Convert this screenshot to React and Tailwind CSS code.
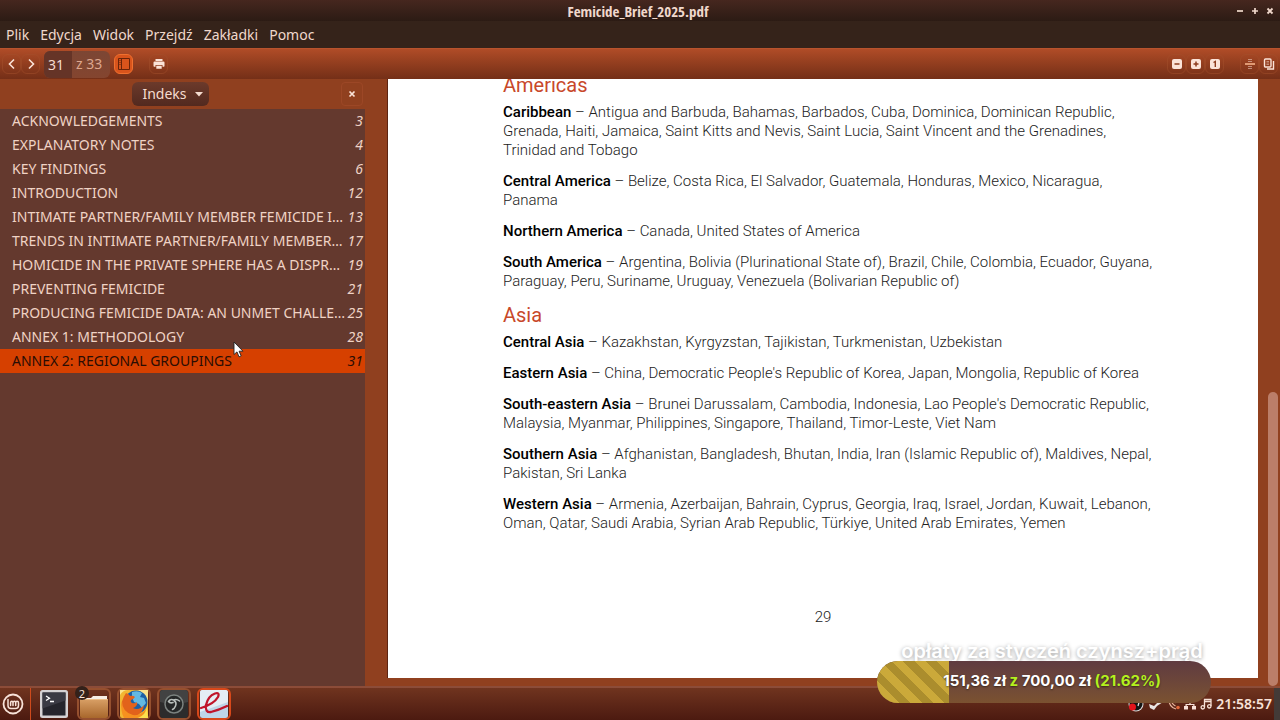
import React from 'react';

const menuItems = ['Plik', 'Edycja', 'Widok', 'Przejdź', 'Zakładki', 'Pomoc'];

const outline = [
  { title: 'ACKNOWLEDGEMENTS', page: 3 },
  { title: 'EXPLANATORY NOTES', page: 4 },
  { title: 'KEY FINDINGS', page: 6 },
  { title: 'INTRODUCTION', page: 12 },
  { title: 'INTIMATE PARTNER/FAMILY MEMBER FEMICIDE I…', page: 13 },
  { title: 'TRENDS IN INTIMATE PARTNER/FAMILY MEMBER…', page: 17 },
  { title: 'HOMICIDE IN THE PRIVATE SPHERE HAS A DISPR…', page: 19 },
  { title: 'PREVENTING FEMICIDE', page: 21 },
  { title: 'PRODUCING FEMICIDE DATA: AN UNMET CHALLE…', page: 25 },
  { title: 'ANNEX 1: METHODOLOGY', page: 28 },
  { title: 'ANNEX 2: REGIONAL GROUPINGS', page: 31 },
];

const regions = [
  {
    name: 'Americas',
    groups: [
      { name: 'Caribbean', lines: ['Antigua and Barbuda, Bahamas, Barbados, Cuba, Dominica, Dominican Republic,', 'Grenada, Haiti, Jamaica, Saint Kitts and Nevis, Saint Lucia, Saint Vincent and the Grenadines,', 'Trinidad and Tobago'] },
      { name: 'Central America', lines: ['Belize, Costa Rica, El Salvador, Guatemala, Honduras, Mexico, Nicaragua,', 'Panama'] },
      { name: 'Northern America', lines: ['Canada, United States of America'] },
      { name: 'South America', lines: ['Argentina, Bolivia (Plurinational State of), Brazil, Chile, Colombia, Ecuador, Guyana,', 'Paraguay, Peru, Suriname, Uruguay, Venezuela (Bolivarian Republic of)'] },
    ],
  },
  {
    name: 'Asia',
    groups: [
      { name: 'Central Asia', lines: ['Kazakhstan, Kyrgyzstan, Tajikistan, Turkmenistan, Uzbekistan'] },
      { name: 'Eastern Asia', lines: ["China, Democratic People's Republic of Korea, Japan, Mongolia, Republic of Korea"] },
      { name: 'South-eastern Asia', lines: ["Brunei Darussalam, Cambodia, Indonesia, Lao People's Democratic Republic,", 'Malaysia, Myanmar, Philippines, Singapore, Thailand, Timor-Leste, Viet Nam'] },
      { name: 'Southern Asia', lines: ['Afghanistan, Bangladesh, Bhutan, India, Iran (Islamic Republic of), Maldives, Nepal,', 'Pakistan, Sri Lanka'] },
      { name: 'Western Asia', lines: ['Armenia, Azerbaijan, Bahrain, Cyprus, Georgia, Iraq, Israel, Jordan, Kuwait, Lebanon,', 'Oman, Qatar, Saudi Arabia, Syrian Arab Republic, Türkiye, United Arab Emirates, Yemen'] },
    ],
  },
];

const ToolButton = ({ label, children, className = 'border-[#a4502c]/50' }) => (
  <button aria-label={label} className={`flex h-5 w-[19px] items-center justify-center rounded-md border ${className}`}>
    {children}
  </button>
);

const TitleBar = () => (
  <header className="flex h-[21px] shrink-0 items-center bg-linear-to-b from-[#46271f] to-[#2c1b14] text-[#f0d8cc]">
    <div className="flex-1" />
    <h1 className="font-['Ubuntu_Condensed','Open_Sans_Condensed','Roboto_Condensed','Liberation_Sans_Narrow',Roboto,sans-serif] text-[15px] leading-5 font-medium">Femicide_Brief_2025.pdf</h1>
    <div className="flex flex-1 justify-end gap-[3px] pr-1">
      <button aria-label="Minimalizuj" className="h-3 w-3">
        <svg viewBox="0 0 12 12" className="h-3 w-3" stroke="currentColor" strokeWidth="1.7"><path d="M3 6h6" /></svg>
      </button>
      <button aria-label="Maksymalizuj" className="h-3 w-3">
        <svg viewBox="0 0 12 12" className="h-3 w-3" stroke="currentColor" strokeWidth="1.7"><path d="M3 6h6M6 3v6" /></svg>
      </button>
      <button aria-label="Zamknij okno" className="h-3 w-3">
        <svg viewBox="0 0 12 12" className="h-3 w-3" stroke="currentColor" strokeWidth="1.9"><path d="M3.500 3.500l5 5M8.500 3.500l-5 5" /></svg>
      </button>
    </div>
  </header>
);

const MenuBar = () => (
  <nav className="flex h-[27px] shrink-0 items-center gap-[11px] bg-[#35231a] px-1.5 text-sm text-[#f0d8cc]">
    {menuItems.map((item) => (
      <button key={item}>{item}</button>
    ))}
  </nav>
);

const Toolbar = () => (
  <div className="flex h-[31px] shrink-0 items-center border-t border-[#b9532d] bg-linear-to-b from-[#b04c27] to-[#742f17] px-0.5 text-[#fbe3d8]">
    <ToolButton label="Poprzednia strona">
      <svg viewBox="0 0 12 12" className="h-3 w-3" fill="none" stroke="currentColor" strokeWidth="1.6"><path d="M8 1.500L3.500 6L8 10.500" /></svg>
    </ToolButton>
    <ToolButton label="Następna strona">
      <svg viewBox="0 0 12 12" className="h-3 w-3" fill="none" stroke="currentColor" strokeWidth="1.6"><path d="M4 1.500L8.500 6L4 10.500" /></svg>
    </ToolButton>
    <div className="ml-1 flex h-[27px] w-[66px] items-center overflow-hidden rounded-md bg-linear-to-b from-[#7c4634] to-[#84452f] text-sm text-[#dda78f]">
      <input aria-label="Strona" defaultValue="31" className="h-full w-7 bg-[#653427] pl-1 text-[#f5dcd0] outline-none" />
      <span className="pl-1 whitespace-nowrap">z 33</span>
    </div>
    <ToolButton label="Panel boczny" className="ml-1 border-[#f0702f] bg-[#d9541c]">
      <svg viewBox="0 0 12 12" className="h-3 w-3 shrink-0" fill="none" stroke="#6a2409"><path d="M.5.500h11v11H.500zM3.500.500v11" /><path d="M1.500 2.500h1M1.500 4.500h1M1.500 6.500h1" /></svg>
    </ToolButton>
    <ToolButton label="Drukuj" className="ml-4 border-[#a4502c]/50">
      <svg viewBox="0 0 12 12" className="h-3 w-3" fill="currentColor"><path d="M2.500 1h7v2h-7zM1.500 3.500h9q1 0 1 1v3.500q0 .8-.8.8H9.500V7H2.500v1.800H1.300Q.5 8.800.500 8V4.500q0-1 1-1zM3.300 7.700h5.400v3H3.300z" /></svg>
    </ToolButton>
    <div className="flex-1" />
    <ToolButton label="Pomniejsz">
      <svg viewBox="0 0 12 12" className="h-3 w-3"><rect x="1" y="1" width="10" height="10" rx="2" fill="currentColor" /><path d="M3.500 6h5" stroke="#8d3b1d" strokeWidth="1.500" /></svg>
    </ToolButton>
    <ToolButton label="Powiększ">
      <svg viewBox="0 0 12 12" className="h-3 w-3"><rect x="1" y="1" width="10" height="10" rx="2" fill="currentColor" /><path d="M3.500 6h5M6 3.500v5" stroke="#8d3b1d" strokeWidth="1.500" /></svg>
    </ToolButton>
    <ToolButton label="Rozmiar rzeczywisty">
      <svg viewBox="0 0 12 12" className="h-3 w-3"><rect x="1" y="1" width="10" height="10" rx="2" fill="currentColor" /><path d="M4.500 4.500L6.300 3.500V9" fill="none" stroke="#8d3b1d" strokeWidth="1.400" /></svg>
    </ToolButton>
    <ToolButton label="Widok ciągły" className="ml-4 border-[#a4502c]/50">
      <svg viewBox="0 0 12 12" className="h-3 w-3" fill="none" stroke="currentColor"><path d="M1 6h10" stroke="#fbb98f" strokeWidth="1.500" /><path d="M4 1.500h4M4 3.500h4M4 8.500h4M4 10.500h4" opacity=".5" /></svg>
    </ToolButton>
    <ToolButton label="Dwie strony">
      <svg viewBox="0 0 12 12" className="h-3 w-3" fill="none" stroke="currentColor" strokeWidth="1.400"><rect x="1.500" y="1" width="6.500" height="8" rx="1" /><path d="M10.500 3v8H4" /><path d="M3.500 3.500h2.500M3.500 5h2.500M3.500 6.500h2.500" strokeWidth=".7" opacity=".7" /></svg>
    </ToolButton>
  </div>
);

const Sidebar = () => (
  <aside className="flex w-[365px] shrink-0 flex-col">
    <div className="flex h-[30px] shrink-0 items-center pr-0.5">
      <div className="flex flex-1 justify-center">
        <button className="flex h-6 items-center gap-2 rounded-md bg-linear-to-b from-[#6c3a2b] to-[#52291f] pr-1.5 pl-2.5 text-sm text-[#f5dcd0]">
          Indeks
          <svg viewBox="0 0 8 5" className="h-[5px] w-2" fill="currentColor"><path d="M0 0h8L4 4.500z" /></svg>
        </button>
      </div>
      <button aria-label="Zamknij panel" className="flex h-6 w-[22px] items-center justify-center rounded border border-[#9c4726] text-[#fbe3d8]">
        <svg viewBox="0 0 8 8" className="h-2 w-2" stroke="currentColor" strokeWidth="1.700"><path d="M1.500 1.500l5 5M6.500 1.500l-5 5" /></svg>
      </button>
    </div>
    <ul className="flex-1 bg-[#64392e] text-sm text-[#f0d3c5]">
      {outline.map((item) => (
        <li key={item.page}>
          <a href={`#page-${item.page}`} className={`flex h-6 items-center justify-between pr-0.5 pl-3 whitespace-nowrap ${item.page === 31 ? 'bg-[#d64000] text-[#2a0d04]' : ''}`}>
            <span>{item.title}</span>
            <span className="italic">{item.page}</span>
          </a>
        </li>
      ))}
    </ul>
  </aside>
);

const Document = () => (
  <main className="flex min-w-0 flex-1 bg-[#90401f] pl-[22px]">
    <article className="mb-2 flex flex-1 flex-col justify-end overflow-hidden border-l border-[#5c2412] bg-white pl-[115px] font-[Roboto,sans-serif] text-[15px] leading-[19px] font-light text-[#222]">
      {regions.map((region) => (
        <section key={region.name}>
          <h2 className="mb-1.5 text-xl leading-6 font-normal text-[#c8482a]">{region.name}</h2>
          {region.groups.map((group) => (
            <p key={group.name} className="mb-3 whitespace-nowrap">
              <b className="font-medium text-black">{group.name}</b> – {group.lines.map((line, i) => (
                <React.Fragment key={line}>{i > 0 && <br />}{line}</React.Fragment>
              ))}
            </p>
          ))}
        </section>
      ))}
      <footer className="mt-[63px] mb-[51px] pr-[115px] text-center">29</footer>
    </article>
    <div className="flex w-[22px] shrink-0 flex-col justify-end pl-2.5">
      <div className="h-[294px] w-2.5 rounded-full bg-[#bb7e69]" />
    </div>
  </main>
);

const TerminalIcon = () => (
  <svg viewBox="0 0 28 28" className="h-7 w-7">
    <rect width="28" height="28" rx="2.500" fill="#d5d2d4" />
    <rect x="2.500" y="2.500" width="23" height="23" fill="#25252d" />
    <path d="M2.500 2.500h23v8l-23 8z" fill="#3a3a44" />
    <path d="M6 6l3.500 2.200L6 10.500M10 11.500h4" fill="none" stroke="#fff" strokeWidth="1.300" />
  </svg>
);

const FolderIcon = () => (
  <svg viewBox="0 0 28 28" className="h-7 w-7">
    <defs>
      <linearGradient id="folder" x1="0" y1="0" x2="0" y2="1">
        <stop offset="0" stopColor="#d9a066" />
        <stop offset="1" stopColor="#a8672c" />
      </linearGradient>
    </defs>
    <path d="M0 8h11l2-2h14v4H0z" fill="#f7eee4" />
    <path d="M0 9h28v17q0 2-2 2H2q-2 0-2-2z" fill="url(#folder)" />
    <path d="M.5 9.500h27" stroke="#edbd86" />
  </svg>
);

const FirefoxIcon = () => (
  <svg viewBox="0 0 28 28" className="h-7 w-7">
    <rect width="28" height="28" rx="2" fill="#f2b632" />
    <path d="M0 5Q3 0 8 0H0zM18 0h10v14Q26 4 18 0z" fill="#fbe28a" />
    <circle cx="16" cy="12" r="11.500" fill="#1d5fa4" />
    <path d="M12 2q6-2 10 1l-2 4 4 1 2 5-4 5-3-4-5-2-2-5z" fill="#63b9e2" />
    <path d="M6 3q3 1 4 3 3-1 5 1-1 2-4 3-1 2 1 3 3 1 5-1 1 4-4 6 6 3 11-3-1 9-9 11-9 1-13-7Q0 12 6 3z" fill="#e2621b" />
    <path d="M2 11q0 11 11 14 8 1 13-6-2 8-9 9H4q-4-7-2-17z" fill="#f6911f" />
    <path d="M18 28q8-3 9-11l1 11z" fill="#fce04e" />
  </svg>
);

const ObsIcon = () => (
  <svg viewBox="0 0 28 28" className="h-7 w-7">
    <rect width="28" height="28" rx="3" fill="#2c2c2c" />
    <path d="M0 3q0-3 3-3h22q3 0 3 3v9Q14 16 0 12z" fill="#424242" />
    <circle cx="14" cy="14" r="9" fill="#252727" stroke="#7b827f" strokeWidth="1.500" />
    <path d="M8.500 11.500q2-3 5-1.500 3-1.500 6 1M14 10.500q3 2 1.500 5.500-1 2.500-3 3.500M8.500 11.500q1.500 2 4.500 1" fill="none" stroke="#b9bfbc" strokeWidth="1.600" strokeLinecap="round" />
  </svg>
);

const ReaderIcon = () => (
  <svg viewBox="0 0 28 28" className="h-7 w-7">
    <rect width="28" height="28" rx="2.500" fill="#bed5e8" />
    <path d="M0 2.500Q0 0 2.500 0h23Q28 0 28 2.500V12L0 22z" fill="#e4edf5" />
    <path d="M1 18Q14 14 18 7q2-5-3-3.500Q8 6 6 15q-1 8 5 7 8-2 16-6" fill="none" stroke="#c0142b" strokeWidth="2.300" strokeLinecap="round" />
  </svg>
);

const tasks = [
  { label: 'Terminal', icon: TerminalIcon, frame: 'border-transparent' },
  { label: 'Pliki', icon: FolderIcon, frame: 'border-[#96502f]', badge: 2 },
  { label: 'Firefox', icon: FirefoxIcon, frame: 'border-[#96502f]' },
  { label: 'OBS Studio', icon: ObsIcon, frame: 'border-[#96502f]' },
  { label: 'Przeglądarka dokumentów', icon: ReaderIcon, frame: 'border-[#d8481a]' },
];

const Tray = () => (
  <div className="flex items-center gap-1 pr-1">
    <svg viewBox="0 0 16 16" className="h-4 w-4"><circle cx="8" cy="8" r="7.500" fill="#ddd" /><circle cx="8" cy="8" r="6.500" fill="#141414" /><path d="M7 3.500q3 0 4 3l-1 3.500" stroke="#ddd" strokeWidth="1.300" fill="none" /><circle cx="4.500" cy="11" r="3.500" fill="#e3131b" /></svg>
    <svg viewBox="0 0 16 16" className="h-4 w-4"><path d="M1 8l5 2 6-6q3-1 3 2l-6 4-3 4-4-2z" fill="#e9e5e2" /><circle cx="12.500" cy="5" r="1.500" fill="#8a8583" /></svg>
    <svg viewBox="0 0 12 12" className="h-3 w-3" fill="none" stroke="#e7b49c" strokeWidth="1.300"><path d="M1 2q0 7 7 9M3.500 2q0 4 4 6M6 2l2 3" /><circle cx="10" cy="9.500" r="1.800" fill="#e2683a" stroke="none" /></svg>
    <svg viewBox="0 0 12 12" className="h-3 w-3" fill="currentColor"><path d="M4 1h4v3.500H6.600V6H10.500v2H12v3.500H8V8h1.300V7H2.700v1H4v3.500H0V8h1.500V6h3.900V4.500H4z" /></svg>
    <svg viewBox="0 0 12 12" className="h-3 w-3" fill="none" stroke="currentColor" strokeWidth="1.300"><path d="M4.500 9V1.500H11V8M4.500 3.500H11" /><circle cx="2.800" cy="9.300" r="1.700" /><circle cx="9.300" cy="8.300" r="1.700" /></svg>
  </div>
);

const Taskbar = () => (
  <footer className="flex h-[34px] shrink-0 items-center border-t-2 border-[#8c4c38] bg-linear-to-b from-[#70341f] to-[#4c1a10] text-[#f8e2d8]">
    <button aria-label="Menu" className="ml-0.5">
      <svg viewBox="0 0 22 22" className="h-[22px] w-[22px]" fill="none" stroke="currentColor" strokeLinecap="round">
        <circle cx="11" cy="11" r="9.500" strokeWidth="1.800" />
        <path d="M6 6.500v6q0 3 3 3h4.500q3 0 3-3V9.700q0-1.500-1.400-1.500t-1.400 1.500v2.800M13.700 9.700q0-1.500-1.300-1.500T11 9.700v2.800M11 9.700q0-1.500-1.200-1.500T8.600 9.700v2.800" strokeWidth="1.500" />
      </svg>
    </button>
    <div className="mr-1.5 ml-1.5 h-full w-px bg-[#cf4a1c]" />
    <div className="flex flex-1 items-center gap-1.5">
      {tasks.map(({ label, icon: Icon, frame, badge }) => (
        <button key={label} aria-label={label} className={`relative flex h-8 w-[34px] items-center justify-center rounded-md border-2 ${frame}`}>
          <Icon />
          {badge && (
            <span className="absolute -top-1 -left-1 flex h-3.5 w-3.5 items-center justify-center rounded-full bg-[#33211a] text-[11px] leading-none">{badge}</span>
          )}
        </button>
      ))}
    </div>
    <Tray />
    <time className="text-sm font-semibold">21:58:57</time>
    <div className="ml-0.5 h-full w-1.5 bg-[#433a37]" />
  </footer>
);

const DonationGoal = () => (
  <div className="absolute right-[69px] bottom-[17px] w-[334px] text-center font-[Inter,sans-serif] text-white">
    <p className="pl-4 text-xl leading-5 font-semibold whitespace-nowrap text-shadow-[0_1px_4px_rgb(0_0_0/0.4)]">opłaty za styczeń czynsz+prąd</p>
    <div className="relative h-[42px] overflow-hidden rounded-full bg-linear-to-b from-[#5f3b40] to-[#7b5230]">
      <div
        className="absolute inset-y-0 left-0 bg-[repeating-linear-gradient(45deg,#ab8d2d_0px,#ab8d2d_8px,#cba93a_8px,#cba93a_16px)]"
        style={{ width: '21.62%' }}
      />
      <p className="relative pl-4 text-[15px] leading-10 font-bold whitespace-nowrap text-shadow-[0_1px_2px_rgb(0_0_0/0.5)]">
        151,36 zł <span className="text-[#b4f01e]">z</span> 700,00 zł <span className="text-[#b4f01e]">(21.62%)</span>
      </p>
    </div>
  </div>
);

const Cursor = () => (
  <svg viewBox="0 0 11 17" className="absolute top-[341px] left-[233px] h-[17px] w-[11px]" fill="#fff" stroke="#222" strokeWidth=".9">
    <path d="M1 1v12.500l3-2.600 2 5 2.200-1-2.100-4.700H10z" />
  </svg>
);

export default function App() {
  return (
    <div className="relative flex h-screen flex-col overflow-hidden bg-[#90401f] font-['Noto_Sans',sans-serif]">
      <TitleBar />
      <MenuBar />
      <Toolbar />
      <div className="flex min-h-0 flex-1">
        <Sidebar />
        <Document />
      </div>
      <Taskbar />
      <DonationGoal />
      <Cursor />
    </div>
  );
}
